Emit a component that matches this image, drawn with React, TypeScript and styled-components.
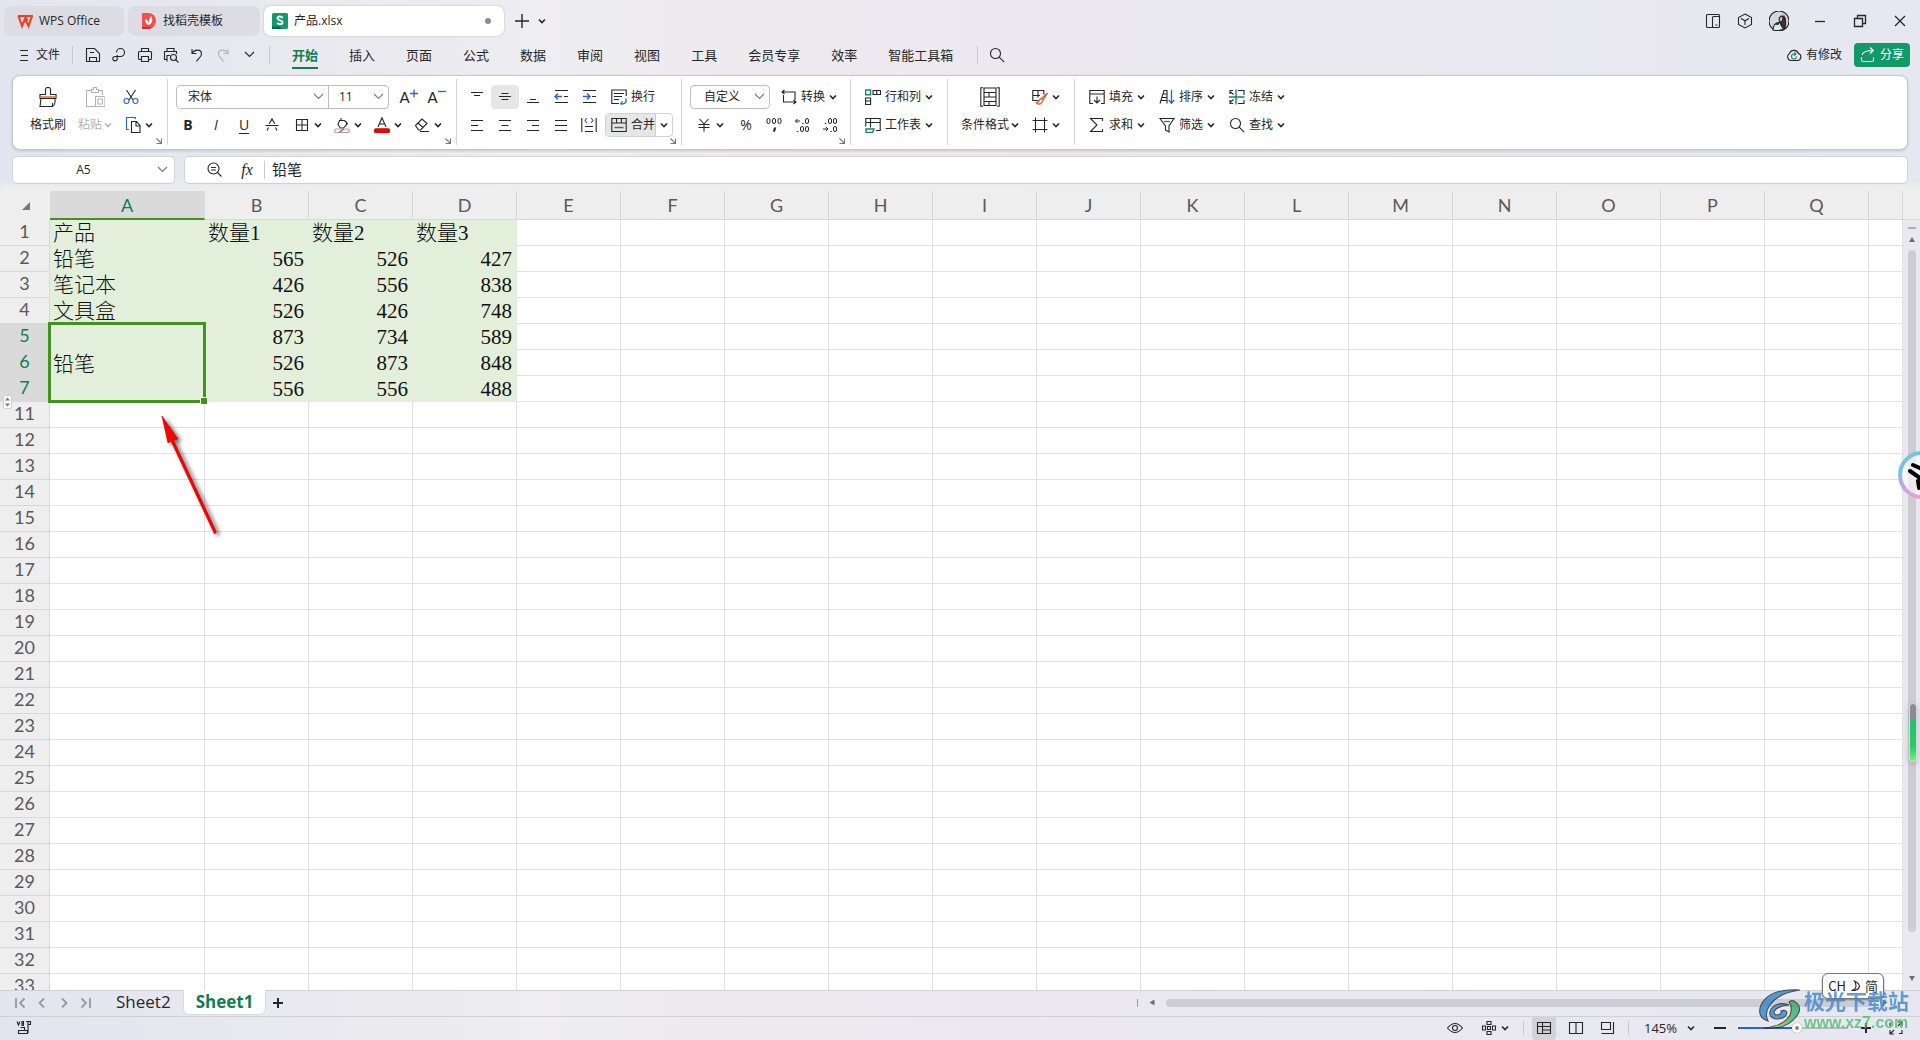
import React, { useEffect, useState } from "react";
import styled, { createGlobalStyle, css } from "styled-components";

const ui = `"Open Sans", "Noto Sans CJK SC", sans-serif`;
const ink = "#262626";
const green = "#0f7f52";
const line = "#d4d4d6";
const fill = "#e2efda";

const GlobalStyle = createGlobalStyle`
  * { box-sizing: border-box; }
  html, body { margin: 0; height: 100%; overflow: hidden; }
  button, input, select { font: inherit; color: inherit; margin: 0; }
  button { border: 0; padding: 0; background: none; cursor: pointer; }
`;

/* ---------- icons ---------- */

const Svg = styled.svg`
  display: block;
  flex: none;
  fill: none;
  stroke: currentColor;
  stroke-width: 1.1;
`;

const BLUE = "#2b5fe0";
const GREEN = "#0f8a5c";
const ORANGE = "#d0622b";

const shapes: Record<string, React.ReactNode> = {
  chev: <path d="M1 2.5 4 5.5 7 2.5" strokeWidth="1.6" />,
  chevThin: <path d="M1 2 5.5 6.5 10 2" />,
  menu: <path d="M0 .5h8M1 5.5h7M0 10.5h8" />,
  save: <path d="M1.5 1.5h8l5 5v8h-13zM4.5 14.5v-4h7v4M5 5.5h4" />,
  share: <path d="M5.500 5.500A4 4 0 1 1 9.500 9.500H4a2.200 2.200 0 1 0 2.200 2.200V8" />,
  print: <path d="M4.5 4.500v-3h7v3M4.500 12.500h-2a1 1 0 0 1-1-1v-6a1 1 0 0 1 1-1h11a1 1 0 0 1 1 1v6a1 1 0 0 1-1 1h-2M4.500 9.500h7v5h-7z" />,
  preview: <><path d="M4 4.500v-3h7v3M4 12.500H1.500v-8h12V7M4 14.500v-6h3" /><circle cx="10.500" cy="10.500" r="3" /><path d="m12.500 12.500 3 3" /></>,
  undo: <path d="M3 2v4.500h4.500M3.200 6C6 2 12.500 2 12.500 7c0 3-3 4-5 7.500" />,
  redo: <path d="M13 2v4.500H8.500M12.800 6C10 2 3.500 2 3.500 7c0 3 3 4 5 7.500" />,
  search: <><circle cx="6.500" cy="6.500" r="5" /><path d="m10.200 10.200 5 5" /></>,
  panel: <path d="M7.500 14.500h-5a1 1 0 0 1-1-1v-11a1 1 0 0 1 1-1h11a1 1 0 0 1 1 1v11a1 1 0 0 1-1 1h-5a1 1 0 0 1-1-1v-9a1 1 0 0 1 1-1h6M10.500 12h2" />,
  cube: <path d="m8 1 6.500 3.500v7L8 15l-6.500-3.500v-7zM4 5.500l4 2.300 4-2.300M8 8v4" />,
  min: <path d="M3 8.500h10" strokeWidth="1.300" />,
  restore: <path d="M5.500 5v-2.500h8v8H11M2.500 5.500h8v8h-8z" strokeWidth="1.300" />,
  close: <path d="m3 3 10 10M13 3 3 13" strokeWidth="1.300" />,
  cloud: <><path d="M4.500 13.500a3.800 3.800 0 0 1-1-7A4.800 4.800 0 0 1 12.500 6.500a3.600 3.600 0 0 1-1 7z" /><path d="M10.500 9.500a2.500 2.500 0 1 1-2.500-2.500h1.500M8.200 5.300 10 7 8.200 8.700" stroke={GREEN} /></>,
  shareBox: <path d="M1.500 10v3a1.500 1.500 0 0 0 1.500 1.500h9a1.500 1.500 0 0 0 1.500-1.500v-3M2 8c1-3.500 5-4.500 11-4.500M10 .5l3.500 3L10 6.500" />,
  brush: <><path d="M7.500 7.500V2.500q0-2 2.500-2t2.500 2v5h5.500v4H2v-4zM3 11.500l-1 8h12.500q2-1 2.500-4v-4" /><path d="M3 10h14" stroke={ORANGE} strokeWidth="1.400" /><path d="M14.500 19v-3" /></>,
  paste: <path d="M6 3.500H1.500v16H10M14 3.500h3.500V8M6.500 5.500v-3h2V.5h3v2h2v3zM10.500 9.500H20v10h-9.500zM13 12h4.500v5H13z" />,
  cut: <><path d="m3.500 1 6.500 10M12.500 1 6 11" /><g stroke={BLUE}><circle cx="3.500" cy="12" r="2.500" /><circle cx="12.500" cy="12" r="2.500" /></g></>,
  copy: <><path d="M10.500 2V.5h-9v12H4" stroke={BLUE} /><path d="M6.500 4.500h5l3.500 4v7H6.500zM11 4.500V9h4" /></>,
  plus: <path d="M0 4.500h8M4 .5v8" stroke={BLUE} strokeWidth="1.300" />,
  dash: <path d="M0 2.500h8" stroke={BLUE} strokeWidth="1.300" />,
  strike: <path d="M1.500 8.500h13M5.200 7 8 2l2.800 5M4.500 10.500l-1.500 3M11.500 10.500l1.500 3" />,
  borders: <path d="M2.500 2.500h11v11h-11zM8 2.500v11M2.500 8h11" />,
  bucket: <><path d="M7 1v3M5.500 3.500h5l3 3-4 4.500h-3L4 7.500zM12.500 4.500v4" /><rect x=".6" y="12" width="14.800" height="3.500" rx="1.700" stroke="#a5a5a5" /><path d="m5 15.500 5-3.500" stroke="#e04040" /></>,
  fontColor: <><path d="M4 10 8 .8 12 10M5.400 7h5.200" /><rect x="0" y="11.500" width="16" height="4.500" rx="2" fill="#f30000" stroke="#b00000" strokeWidth=".5" /></>,
  eraser: <path d="m1.500 8.500 6.500-6.500 5 4.500-6.500 6.500h-2zM4 6l5.500 5M6 14.500h9" />,
  vTop: <path d="M2 3.500h12M5 6.500h6" />,
  vMid: <path d="M4.500 4.500h7M2 7.500h12M4.500 10.500h7" />,
  vBot: <path d="M5 10.500h6M2 13.500h12" />,
  left: <path d="M2 3.500h12M2 8.500h7M2 13.500h12" />,
  center: <path d="M2 3.500h12M4.500 8.500h7M2 13.500h12" />,
  right: <path d="M2 3.500h12M7 8.500h7M2 13.500h12" />,
  justify: <path d="M2 3.500h12M2 8.500h12M2 13.500h12" />,
  outdent: <><path d="M2 1.500h13M2 13.500h13M11 7.500h4" /><path d="M2 7.500h7M5 4.500l-3 3 3 3" stroke={BLUE} strokeWidth="1.400" /></>,
  indent: <><path d="M2 1.500h13M2 13.500h13M11 7.500h4" /><path d="M2 7.500h7M6 4.500l3 3-3 3" stroke={BLUE} strokeWidth="1.400" /></>,
  distribute: <><path d="M.8 1v14M15.200 1v14M4 9.500h8M4 14.500h8" /><path d="M6 1 4 3.500 6 6M10 1l2 2.500L10 6" stroke={BLUE} /></>,
  wrap: <><path d="M8 14.500H.8V1h14.400v6M3 4.500h10M3 7.500h8M3 10.500h5" /><path d="M15 9.500v3q0 2.500-5.500 2.500M11.500 12.500 9.500 15" stroke={GREEN} strokeWidth="1.300" /></>,
  merge: <><path d="M.8 1.500h14.400v13H.8zM.8 6h14.400M5.600 1.500V6M10.400 1.500V6" /><path d="M3.500 10.500h9" stroke={GREEN} strokeWidth="1.400" /></>,
  convert: <path d="M3.500 1 1 3l2.500 2M1 3h13v8M12.500 11l2.500 2-2.500 2M15 13H2.500V6" />,
  yen: <path d="m3.500 2 4.500 5 4.500-5M2.500 7.500h11M2.500 10.500h11M8 7v7.500" />,
  comma: <><g strokeWidth="1"><rect x="1" y="1.500" width="3" height="5" rx="1.500" /><rect x="6.500" y="1.500" width="3" height="5" rx="1.500" /><rect x="12" y="1.500" width="3" height="5" rx="1.500" /></g><path d="M8.500 10.500q1 2-1 4" strokeWidth="2" /></>,
  decUp: <g strokeWidth="1"><path d="M6 4H1.500M3.500 2 1.500 4l2 2" /><rect x="11.500" y="1.500" width="3" height="5" rx="1.500" /><path d="M9 6v1M3.500 14v1" strokeWidth="1.500" /><rect x="6.500" y="9.500" width="3" height="5" rx="1.500" /><rect x="11.500" y="9.500" width="3" height="5" rx="1.500" /></g>,
  decDown: <g strokeWidth="1"><rect x="6.500" y="1.500" width="3" height="5" rx="1.500" /><rect x="11.500" y="1.500" width="3" height="5" rx="1.500" /><path d="M3.500 6v1M9 14v1" strokeWidth="1.500" /><path d="M1 12h5M4 10l2 2-2 2" /><rect x="11.500" y="9.500" width="3" height="5" rx="1.500" /></g>,
  rowscols: <><path d="M8 1.500h7.500v4H8zM11.700 1.500v4M.6 9v6.500h5V9zM.6 12h5" /><path d="M.6 1h5v4.800h-5z" stroke={GREEN} strokeWidth="1.400" /></>,
  sheet: <><path d="M.8 9.500v-8h14.400v12H11M.8 5.500h14.400M5.500 1.500v9" /><path d="M1 12h8l-1.500 3.500H1z" stroke={GREEN} strokeWidth="1.400" /></>,
  cond: <path d="M3 .8H.8v18.400H3M17 .8h2.200v18.400H17M4 1h12v4.500H4zM4 5.500v13h12v-13M4 10h5M9 5.500v4.500M9 10h7M9 14.500h7M4 14.500h5v4" />,
  style: <><path d="M6 11.500H.8v-10h11v4M.8 6.500H8M6 1.500v7" /><path d="m15.500 4-6 5.500 1.500 1.500zM9.500 9.500c-3 0-2 4-5 4.500 3 2.500 6 0 6.500-3" stroke={ORANGE} strokeWidth="1.300" /></>,
  frame: <path d="M3.500.5v15M12.500.5v15M.5 3.500h15M.5 12.500h15" />,
  fillDown: <path d="M4 14.500H.8v-13h14.400v13H12M.8 5h14.400M8 7.500v6M5 11l3 3 3-3" />,
  sigma: <path d="M13.500 4V1.500H1.500L8 8l-6.500 6.500h12V12" />,
  sort: <><path d="M1 14.500 5 1.500h3v13M3 8.500h5M2 11.500h6M4 5h4" /><path d="M12.500 1v13M9.800 11l2.700 3.200 2.700-3.200" stroke={BLUE} strokeWidth="1.300" /></>,
  filter: <><path d="M1 1.500h14L10 9v6l-3.500-2V9z" /><path d="M5 4.500h6" stroke={GREEN} strokeWidth="1.300" /></>,
  freeze: <><path d="M1 5V1.500h3M9 1.500h6V6M1 11v3.500h3M9 14.500h6V11M1.500 3l3 2.500M1.500 13l3-2.500" /><path d="M0 8h15.500M7 .5v15" stroke={GREEN} strokeWidth="1.400" /></>,
  launcher: <path d="M.5 1.500 5 6M5.500 1.500v5h-5" stroke="#777" />,
  zoomOut: <><circle cx="6.500" cy="6.500" r="5.500" /><path d="M4 5.500h5M4 8h5M10.500 10.500l4 4" /></>,
  first: <path d="M4 3v10M12.500 3.500 8 8l4.500 4.500" strokeWidth="1.800" />,
  prev: <path d="M10 3.500 5.500 8l4.500 4.500" strokeWidth="1.800" />,
  next: <path d="M6 3.500 10.500 8 6 12.500" strokeWidth="1.800" />,
  last: <path d="M12 3v10M3.500 3.500 8 8l-4.500 4.500" strokeWidth="1.800" />,
  add: <path d="M3 8h10M8 3v10" strokeWidth="2" />,
  addThin: <path d="M1 8h14M8 1v14" strokeWidth="1.400" />,
  minus: <path d="M2 8h12" strokeWidth="2" />,
  vba: <path d="M1 1.500 2.500 5 4 1.500M6 1.500h1.500v4H6zM6 3.500h2M14.500 5V1.500h-4.500M12 1.500V13M14.500 4.500H12M4.500 7.500h4v3M2.500 10.500h9v3h-9z" />,
  eye: <><path d="M.5 8Q8-1 15.500 8 8 17 .5 8z" /><circle cx="8" cy="8" r="2.500" /></>,
  focus: <path d="M6 1.500h4v3H6zM6 11.500h4v3H6zM1.500 6h3v4h-3zM11.500 6h3v4h-3zM6.500 6.500h3v3h-3z" />,
  normal: <path d="M1.500 2.500h13v11h-13zM1.500 6.500h13M6.500 2.500v11M6.500 10h8" />,
  pages: <path d="M1.500 2.500h13v11h-13zM8 2.500v11" />,
  breaks: <path d="M1.500 2.500h9v7h-9zM13.500 2v11.500H1.500" />,
  full: <path d="M10 2h4v4M14 2l-4 4M6 14H2v-4M2 14l4-4M2 6V2.500M14 10v3.500h-3" />,
};

const Icon = ({ name, size = 16, color }: { name: string; size?: number; color?: string }) => (
  <Svg width={size} height={size} viewBox={`0 0 ${size} ${size}`} color={color} aria-hidden="true">
    {shapes[name]}
  </Svg>
);

const Chev = ({ color }: { color?: string }) => <Icon name="chev" size={8} color={color} />;

/* ---------- frame ---------- */

const Window = styled.div`
  position: relative;
  display: flex;
  flex-direction: column;
  height: 100vh;
  overflow: hidden;
  color: ${ink};
  font: 12px/16px ${ui};
  background: linear-gradient(90deg, #e3e4ef 0, #eeedf0 28%, #ece9ef 45%, #e9e8f0 80%, #e6e7f0 100%);
`;

const TitleBar = styled.header`
  display: flex;
  align-items: center;
  height: 41px;
  padding: 0 0 0 4px;
`;

const DocTab = styled.button<{ $width: number; $active?: boolean }>`
  display: flex;
  align-items: center;
  gap: 6px;
  width: ${(p) => p.$width}px;
  height: 30px;
  margin-right: 4px;
  padding: 0 13px;
  border-radius: 7px;
  background: ${(p) => (p.$active ? "#fff" : "#dcdce2")};
  box-shadow: ${(p) => (p.$active ? "0 0 2px rgba(0,0,0,.25)" : "none")};
  padding-left: ${(p) => (p.$active ? 8 : 13)}px;
`;

const Dirty = styled.span`
  width: 6px;
  height: 6px;
  margin-left: auto;
  border-radius: 3px;
  background: #8e8e8e;
`;

const Spacer = styled.div`
  flex: 1;
`;

const IconButton = styled.button<{ $width?: number; $active?: boolean }>`
  display: flex;
  align-items: center;
  justify-content: center;
  flex: none;
  width: ${(p) => p.$width ?? 28}px;
  height: 24px;
  border-radius: 4px;
  background: ${(p) => (p.$active ? "#e6e6e6" : "none")};
`;

const Avatar = styled(IconButton)`
  margin: 0 11px 0 8px;
`;

const MenuBar = styled.nav`
  display: flex;
  align-items: center;
  height: 34px;
  padding: 0 10px 6px 12px;
`;

const FileButton = styled.button`
  display: flex;
  align-items: center;
  gap: 5px;
  height: 24px;
  padding: 0 12px 0 8px;
`;

const Divider = styled.i<{ $before?: number; $after: number }>`
  width: 1px;
  height: 18px;
  margin: 0 ${(p) => p.$after}px 0 ${(p) => p.$before ?? 0}px;
  background: #c9c8ce;
`;

const Tabs = styled.div`
  display: flex;
  gap: 31px;
  margin: 0 24px 0 15px;
`;

const MenuTab = styled.button<{ $active?: boolean }>`
  height: 28px;
  border-bottom: 2px solid transparent;
  padding-top: 2px;
  font-size: 13px;
  line-height: 24px;
  white-space: nowrap;
  ${(p) =>
    p.$active &&
    css`
      color: ${green};
      font-weight: 700;
      border-color: ${green};
    `}
`;

const Changes = styled.button`
  display: flex;
  align-items: center;
  gap: 4px;
  margin-right: 12px;
`;

const ShareButton = styled.button`
  display: flex;
  align-items: center;
  gap: 4px;
  height: 24px;
  padding: 0 6px;
  border-radius: 4px;
  color: #fff;
  background: #119967;
`;

/* ---------- ribbon ---------- */

const Ribbon = styled.section`
  display: flex;
  flex: none;
  height: 75px;
  margin: 0 12px 6px;
  padding: 3px 0 4px;
  border: 1px solid #c8c7cd;
  border-radius: 8px;
  background: #fff;
  box-shadow: 0 1px 3px rgba(0, 0, 0, 0.16);
`;

const Group = styled.div<{ $left: number; $right: number; $last?: boolean }>`
  position: relative;
  display: flex;
  padding: 6px ${(p) => p.$right}px 0 ${(p) => p.$left}px;
  border-right: ${(p) => (p.$last ? 0 : 1)}px solid ${line};
`;

const Rows = styled.div`
  display: flex;
  flex-direction: column;
  gap: 4px;
`;

const Row = styled.div<{ $inset?: number; $gap?: number }>`
  display: flex;
  gap: ${(p) => p.$gap ?? 0}px;
  height: 24px;
  padding-left: ${(p) => p.$inset ?? 0}px;
`;

const Tall = styled.button<{ $width: number; $muted?: boolean }>`
  display: flex;
  flex-direction: column;
  align-items: center;
  gap: 4px;
  width: ${(p) => p.$width}px;
  height: 52px;
  color: ${(p) => (p.$muted ? "#b3b3b3" : "inherit")};
`;

const TallIcon = styled.span`
  display: flex;
  align-items: center;
  height: 24px;
`;

const TallLabel = styled.span`
  display: flex;
  align-items: center;
  gap: 2px;
  height: 24px;
  white-space: nowrap;
`;

const Split = styled.button`
  display: flex;
  align-items: center;
  gap: 4px;
  height: 24px;
  padding: 0 4px 0 8px;
`;

const Labelled = styled.button`
  display: flex;
  align-items: center;
  gap: 4px;
  height: 24px;
  padding: 0 4px 0 6px;
  white-space: nowrap;
`;

const MergeBox = styled.div`
  display: flex;
  height: 24px;
  border: 1px solid #d2d2d2;
  border-radius: 4px;
  overflow: hidden;
`;

const MergeMain = styled(Labelled)`
  height: 22px;
  padding: 0 0 0 5px;
  background: #e6e6e6;
  border-right: 1px solid #cfcfcf;
`;

const MergeMore = styled(IconButton)`
  height: 22px;
`;

const LauncherButton = styled.button`
  position: absolute;
  right: 3px;
  bottom: 0;
`;

const Launcher = () => (
  <LauncherButton aria-label="更多设置">
    <Icon name="launcher" size={8} />
  </LauncherButton>
);

const Combo = styled.div`
  display: flex;
  height: 24px;
  border: 1px solid #bdbdbd;
  border-radius: 4px;
`;

const SelectBox = styled.label<{ $width: number; $divided?: boolean }>`
  display: flex;
  align-items: center;
  width: ${(p) => p.$width}px;
  padding-right: 4px;
  color: #7a7a7a;
  border-left: ${(p) => (p.$divided ? 1 : 0)}px solid #bdbdbd;
`;

const Select = styled.select<{ $pad: number }>`
  flex: 1;
  min-width: 0;
  height: 22px;
  padding: 0 0 0 ${(p) => p.$pad}px;
  border: 0;
  outline: 0;
  appearance: none;
  background: none;
  color: ${ink};
`;

const Letter = styled.span<{ $kind: string }>`
  font-family: "Open Sans", sans-serif;
  font-size: 14px;
  font-weight: ${(p) => (p.$kind === "b" ? 700 : 400)};
  font-style: ${(p) => (p.$kind === "i" ? "italic" : "normal")};
  text-decoration: ${(p) => (p.$kind === "u" ? "underline" : "none")};
  text-underline-offset: 3px;
`;

const Sized = styled.span`
  display: flex;
  align-items: flex-start;
  font-family: Lato, sans-serif;
  font-size: 15px;
`;

/* ---------- formula bar ---------- */

const FormulaBar = styled.section`
  display: flex;
  gap: 9px;
  height: 28px;
  margin: 0 12px 7px;
`;

const Field = styled.div<{ $width?: number }>`
  display: flex;
  align-items: center;
  flex: ${(p) => (p.$width ? `0 0 ${p.$width}px` : "1")};
  min-width: 0;
  border: 1px solid #d2d1d6;
  border-bottom-color: #b9b9bc;
  border-radius: 5px;
  background: #fff;
`;

const NameInput = styled.input`
  flex: 1;
  width: 0;
  min-width: 0;
  padding: 0 0 0 4px;
  border: 0;
  outline: 0;
  text-align: center;
  background: none;
`;

const NameMore = styled(IconButton)`
  color: #777;
`;

const Fx = styled.span`
  font: italic 16px/20px "Liberation Serif", serif;
`;

const FormulaTools = styled.div`
  display: flex;
  align-items: center;
  gap: 2px;
  padding-left: 15px;
`;

const FormulaInput = styled.input`
  flex: 1;
  min-width: 0;
  height: 24px;
  padding: 0 0 3px;
  border: 0;
  outline: 0;
  font-size: 15px;
  background: none;
`;

/* ---------- sheet ---------- */

const SheetArea = styled.main`
  position: relative;
  display: flex;
  flex: 1;
  min-height: 0;
  background: #eee;
  box-shadow: 0 -7px 5px #eee;
`;

const GridView = styled.div`
  position: relative;
  flex: 1;
  min-width: 0;
  overflow: hidden;
`;

const Grid = styled.table`
  width: 100%;
  table-layout: fixed;
  border-collapse: separate;
  border-spacing: 0;
  background: #fff;
`;

const head = css`
  padding: 0;
  font: 400 18px/22px Lato, sans-serif;
  text-align: center;
  border: 0 solid #d8d8d8;
  border-width: 0 1px 1px 0;
`;

const ColHead = styled.th<{ $on?: boolean }>`
  ${head}
  height: 29px;
  color: ${(p) => (p.$on ? green : "#595959")};
  background: ${(p) => (p.$on ? "#dadada" : "#eee")};
  ${(p) => p.$on && "border-bottom: 2px solid #43921f; border-right-color: #dadada;"}
`;

const Corner = styled.th`
  ${head}
  border-color: #eee;
  background: #eee;
`;

const CornerMark = styled.i`
  display: block;
  width: 0;
  height: 0;
  margin: 2px 0 0 22px;
  border: 4px solid transparent;
  border-right-color: #767676;
  border-bottom-color: #767676;
`;

const RowHead = styled.th<{ $on?: boolean }>`
  ${head}
  position: relative;
  height: 26px;
  vertical-align: top;
  color: ${(p) => (p.$on ? green : "#595959")};
  background: ${(p) => (p.$on ? "#dadada" : "#eee")};
  border-bottom-color: ${(p) => (p.$on ? "#dadada" : "#d8d8d8")};
`;

const Cell = styled.td<{ $filled?: boolean; $num?: boolean; $merged?: boolean }>`
  position: relative;
  height: 26px;
  padding: ${(p) => (p.$merged ? "4px" : "2px")} 4px 0 3px;
  border: 0 solid ${(p) => (p.$filled ? fill : "#e2e2e2")};
  border-width: 0 1px 1px 0;
  background: ${(p) => (p.$filled ? fill : "#fff")};
  color: #111;
  font: 300 21px/23px "Liberation Serif", "Noto Sans CJK SC", serif;
  text-align: ${(p) => (p.$num ? "right" : "left")};
  white-space: nowrap;
`;

const Selection = styled.span`
  position: absolute;
  z-index: 2;
  inset: -2px;
  border: 3px solid #43921f;
  &::after {
    content: "";
    position: absolute;
    right: -4px;
    bottom: -4px;
    width: 6px;
    height: 6px;
    background: #43921f;
    border: 0 solid #fff;
    border-width: 1px 0 0 1px;
  }
`;

const Unhide = styled.button`
  position: absolute;
  z-index: 2;
  left: 3px;
  bottom: -8px;
  border: 1px solid #d0d0d0;
  border-radius: 2px;
  background: #fff;
`;

const Pointer = styled.svg`
  position: absolute;
  z-index: 3;
  left: 150px;
  top: 215px;
`;

const VScroll = styled.div`
  display: flex;
  flex-direction: column;
  align-items: center;
  gap: 8px;
  flex: 0 0 17px;
  margin-top: 28px;
  padding: 7px 0 9px;
  background: #e9e8ee;
  border-top: 1px solid #dcdce0;
`;

const Grip = styled.i`
  width: 8px;
  height: 2px;
  background: #b0b0b4;
`;

const Triangle = styled.i<{ $turn: number }>`
  flex: none;
  width: 0;
  height: 0;
  border: 3px solid transparent;
  border-bottom: 5px solid #6d6d70;
  border-top: 0;
  transform: rotate(${(p) => p.$turn}deg);
`;

const VTrack = styled.div`
  flex: 1;
  padding-bottom: 36px;
`;

const VThumb = styled.div`
  width: 8px;
  height: 100%;
  border-radius: 4px;
  background: #cdccd2;
`;

/* ---------- bottom bars ---------- */

const SheetTabs = styled.footer`
  display: flex;
  flex: none;
  height: 27px;
  border: 0 solid #d0cfd4;
  border-width: 1px 0;
`;

const SheetNav = styled.div`
  display: flex;
  gap: 6px;
  margin: 0 10px 0 12px;
  color: #9a9a9c;
`;

const SheetTab = styled.button<{ $active?: boolean }>`
  height: 24px;
  margin-top: -1px;
  padding: 0 12px;
  font: ${(p) => (p.$active ? 700 : 400)} 17px/24px "Open Sans", sans-serif;
  ${(p) =>
    p.$active &&
    css`
      height: 25px;
      color: ${green};
      background: #fff;
      border: 1px solid #dcdce0;
      border-top: 0;
      border-radius: 0 0 6px 6px;
    `}
`;

const HScroll = styled.div`
  display: flex;
  align-items: center;
  gap: 11px;
  flex: 0 0 41%;
  margin-left: auto;
  padding: 0 32px 2px 4px;
`;

const HGrip = styled.i`
  width: 1px;
  height: 8px;
  background: #9c9ca0;
`;

const HThumb = styled.div`
  flex: 1;
  height: 8px;
  border-radius: 4px;
  background: #cdccd2;
`;

const StatusBar = styled.footer`
  display: flex;
  align-items: center;
  gap: 8px;
  flex: none;
  height: 23px;
  padding: 0 12px 2px;
`;

const StatusSep = styled.i`
  width: 1px;
  height: 14px;
  background: #c9c8ce;
`;

const ViewButton = styled(IconButton)`
  background: ${(p) => (p.$active ? "#d3d2d9" : "none")};
`;

const Focus = styled.button`
  display: flex;
  align-items: center;
  gap: 4px;
  width: 36px;
  padding-left: 2px;
`;

const ZoomLevel = styled.button`
  display: flex;
  align-items: center;
  gap: 10px;
  width: 65px;
  padding-left: 7px;
  font-size: 13px;
`;

const Slider = styled.input`
  width: 110px;
  height: 16px;
  appearance: none;
  background: linear-gradient(90deg, #2b5fe0 54%, #b9b9c0 54%) center / 100% 2px no-repeat;
  &::-webkit-slider-thumb {
    appearance: none;
    width: 10px;
    height: 10px;
    border-radius: 5px;
    border: 3px solid #fff;
    background: #8a8a8a;
    box-shadow: 0 0 1px rgba(0, 0, 0, 0.5);
  }
`;

/* ---------- floating widgets ---------- */

const Ime = styled.div`
  position: absolute;
  z-index: 4;
  right: 36px;
  bottom: 41px;
  display: flex;
  align-items: center;
  gap: 4px;
  height: 26px;
  padding: 0 5px;
  border: 1px solid #777;
  border-radius: 6px;
  background: #fff;
  font-size: 13px;
  font-family: "Noto Sans CJK SC", sans-serif;
  box-shadow: 0 1px 2px rgba(0, 0, 0, 0.4);
`;

const Watermark = styled.div`
  position: absolute;
  z-index: 5;
  right: 11px;
  bottom: 7px;
  display: flex;
  gap: 2px;
  opacity: 0.8;
  pointer-events: none;
`;

const WaterName = styled.div`
  color: #3f87d0;
  font: 700 21px/25px "Noto Sans CJK SC", sans-serif;
`;

const WaterUrl = styled.div`
  color: #4fc06b;
  font: 700 16px/20px "Liberation Sans", sans-serif;
`;

const Assistant = styled.button`
  position: absolute;
  z-index: 4;
  right: -26px;
  top: 451px;
`;

const Battery = styled.div`
  position: absolute;
  z-index: 4;
  right: 3px;
  top: 703px;
  width: 8px;
  height: 59px;
  border: 1px solid #d8d8dc;
  border-radius: 4px;
  background: linear-gradient(#8b8a90 27%, #1fc46a 28%, #29cc6a 75%, #76f07a);
  box-shadow: 0 2px 6px rgba(0, 0, 0, 0.2);
`;

/* ---------- data ---------- */

const columns = "ABCDEFGHIJKLMNOPQ".split("");
const data: (string | number)[][] = [
  ["产品", "数量1", "数量2", "数量3"],
  ["铅笔", 565, 526, 427],
  ["笔记本", 426, 556, 838],
  ["文具盒", 526, 426, 748],
  ["铅笔", 873, 734, 589],
  ["", 526, 873, 848],
  ["", 556, 556, 488],
];
const ROW_HEIGHT = 26;
const CHROME_HEIGHT = 270;
const HIDDEN_FROM = 8;
const HIDDEN_COUNT = 3;
const menuTabs = ["开始", "插入", "页面", "公式", "数据", "审阅", "视图", "工具", "会员专享", "效率", "智能工具箱"];
const quick = [
  ["save", "保存"],
  ["share", "输出为PDF"],
  ["print", "打印"],
  ["preview", "打印预览"],
  ["undo", "撤销"],
];

/* Row numbers that fit in the window, skipping the hidden ones. */
const visibleRows = () => {
  const count = Math.max(data.length, Math.ceil((window.innerHeight - CHROME_HEIGHT) / ROW_HEIGHT));
  return Array.from({ length: count }, (_, i) => (i + 1 < HIDDEN_FROM ? i + 1 : i + 1 + HIDDEN_COUNT));
};

const useVisibleRows = () => {
  const [rows, setRows] = useState(visibleRows);
  useEffect(() => {
    const update = () => setRows(visibleRows());
    window.addEventListener("resize", update);
    return () => window.removeEventListener("resize", update);
  }, []);
  return rows;
};

const Tool = ({ icon, label, active, width }: { icon: string; label: string; active?: boolean; width?: number }) => (
  <IconButton aria-label={label} $active={active} $width={width}>
    <Icon name={icon} />
  </IconButton>
);

const SplitTool = ({ icon, label }: { icon: string; label: string }) => (
  <Split aria-label={label}>
    <Icon name={icon} />
    <Chev />
  </Split>
);

const TextTool = ({ icon, text, plain }: { icon: string; text: string; plain?: boolean }) => (
  <Labelled>
    <Icon name={icon} />
    <span>{text}</span>
    {!plain && <Chev />}
  </Labelled>
);

function RibbonBar() {
  return (
    <Ribbon>
      <Group $left={12} $right={10}>
        <Tall $width={46}>
          <TallIcon><Icon name="brush" size={20} /></TallIcon>
          <TallLabel>格式刷</TallLabel>
        </Tall>
        <Tall $width={48} $muted>
          <TallIcon><Icon name="paste" size={20} /></TallIcon>
          <TallLabel>粘贴<Chev /></TallLabel>
        </Tall>
        <Rows>
          <Tool icon="cut" label="剪切" width={24} />
          <Row>
            <Labelled aria-label="复制"><Icon name="copy" /><Chev /></Labelled>
          </Row>
        </Rows>
        <Launcher />
      </Group>

      <Group $left={6} $right={5}>
        <Rows>
          <Row $inset={2} $gap={6}>
            <Combo>
              <SelectBox $width={151}>
                <Select $pad={11} aria-label="字体"><option>宋体</option></Select>
                <Icon name="chevThin" size={11} />
              </SelectBox>
              <SelectBox $width={60} $divided>
                <Select $pad={10} aria-label="字号"><option>11</option></Select>
                <Icon name="chevThin" size={11} />
              </SelectBox>
            </Combo>
            <Row>
              <IconButton aria-label="增大字号"><Sized>A<Icon name="plus" size={9} /></Sized></IconButton>
              <IconButton aria-label="减小字号"><Sized>A<Icon name="dash" size={9} /></Sized></IconButton>
            </Row>
          </Row>
          <Row>
            <IconButton aria-label="加粗"><Letter $kind="b">B</Letter></IconButton>
            <IconButton aria-label="倾斜"><Letter $kind="i">I</Letter></IconButton>
            <IconButton aria-label="下划线"><Letter $kind="u">U</Letter></IconButton>
            <Tool icon="strike" label="删除线" />
            <SplitTool icon="borders" label="边框" />
            <SplitTool icon="bucket" label="填充颜色" />
            <SplitTool icon="fontColor" label="字体颜色" />
            <SplitTool icon="eraser" label="清除" />
          </Row>
        </Rows>
        <Launcher />
      </Group>

      <Group $left={6} $right={8}>
        <Rows>
          <Row>
            <Tool icon="vTop" label="顶端对齐" />
            <Tool icon="vMid" label="垂直居中" active />
            <Tool icon="vBot" label="底端对齐" />
            <Tool icon="outdent" label="减少缩进" />
            <Tool icon="indent" label="增加缩进" />
            <Row $inset={2}><TextTool icon="wrap" text="换行" plain /></Row>
          </Row>
          <Row>
            <Tool icon="left" label="左对齐" />
            <Tool icon="center" label="水平居中" />
            <Tool icon="right" label="右对齐" />
            <Tool icon="justify" label="两端对齐" />
            <Tool icon="distribute" label="分散对齐" />
            <Row $inset={2}>
              <MergeBox>
                <MergeMain><Icon name="merge" /><span>合并</span></MergeMain>
                <MergeMore $width={16} aria-label="合并选项"><Chev /></MergeMore>
              </MergeBox>
            </Row>
          </Row>
        </Rows>
        <Launcher />
      </Group>

      <Group $left={6} $right={6}>
        <Rows>
          <Row $inset={2} $gap={5}>
            <Combo>
              <SelectBox $width={78}>
                <Select $pad={13} aria-label="数字格式"><option>自定义</option></Select>
                <Icon name="chevThin" size={11} />
              </SelectBox>
            </Combo>
            <TextTool icon="convert" text="转换" />
          </Row>
          <Row>
            <Row><SplitTool icon="yen" label="货币" /></Row>
            <Row $inset={4}>
              <IconButton aria-label="百分比"><Letter $kind="n">%</Letter></IconButton>
              <Tool icon="comma" label="千位分隔" />
              <Tool icon="decUp" label="增加小数位" />
              <Tool icon="decDown" label="减少小数位" />
            </Row>
          </Row>
        </Rows>
        <Launcher />
      </Group>

      <Group $left={8} $right={10}>
        <Rows>
          <TextTool icon="rowscols" text="行和列" />
          <TextTool icon="sheet" text="工作表" />
        </Rows>
      </Group>

      <Group $left={8} $right={10}>
        <Tall $width={68}>
          <TallIcon><Icon name="cond" size={20} /></TallIcon>
          <TallLabel>条件格式<Chev /></TallLabel>
        </Tall>
        <Rows>
          <SplitTool icon="style" label="表格样式" />
          <SplitTool icon="frame" label="单元格样式" />
        </Rows>
      </Group>

      <Group $left={8} $right={8} $last>
        <Rows>
          <Row $gap={4}>
            <TextTool icon="fillDown" text="填充" />
            <TextTool icon="sort" text="排序" />
            <TextTool icon="freeze" text="冻结" />
          </Row>
          <Row $gap={4}>
            <TextTool icon="sigma" text="求和" />
            <TextTool icon="filter" text="筛选" />
            <TextTool icon="search" text="查找" />
          </Row>
        </Rows>
      </Group>
    </Ribbon>
  );
}

function SheetGrid() {
  const rows = useVisibleRows();
  return (
    <Grid>
      <colgroup>
        <col width={50} />
        <col width={155} />
        {columns.slice(1).map((c) => <col key={c} width={104} />)}
        <col />
      </colgroup>
      <thead>
        <tr>
          <Corner><CornerMark /></Corner>
          {columns.map((c) => <ColHead key={c} scope="col" $on={c === "A"}>{c}</ColHead>)}
          <ColHead />
        </tr>
      </thead>
      <tbody>
        {rows.map((n) => {
          const values = data[n - 1];
          return (
            <tr key={n}>
              <RowHead scope="row" $on={n >= 5 && n <= 7}>
                {n}
                {n === 7 && (
                  <Unhide aria-label="展开隐藏行">
                    <Svg width="7" height="12" viewBox="0 0 7 12">
                      <path d="M1 4.500 3.500 1.500 6 4.500zM1 7.500h5L3.500 10.500z" fill="#6b7a99" stroke="none" />
                    </Svg>
                  </Unhide>
                )}
              </RowHead>
              {columns.map((c, i) => {
                if (i === 0 && (n === 6 || n === 7)) return null;
                const value = values?.[i];
                const merged = i === 0 && n === 5;
                return (
                  <Cell
                    key={c}
                    rowSpan={merged ? 3 : undefined}
                    $merged={merged}
                    $filled={value !== undefined}
                    $num={typeof value === "number"}
                  >
                    {value}
                    {merged && <Selection />}
                  </Cell>
                );
              })}
              <Cell />
            </tr>
          );
        })}
      </tbody>
    </Grid>
  );
}

export default function App() {
  return (
    <Window>
      <GlobalStyle />
      <TitleBar>
        <DocTab $width={120}>
          <Svg width="16" height="16" viewBox="0 0 16 16">
            <path d="M1 3h14l-3.500 10L8 6 5 13 1.500 3M8 3.500 10.500 8" stroke="#f0402c" strokeWidth="2.200" />
          </Svg>
          <span>WPS Office</span>
        </DocTab>
        <DocTab $width={132}>
          <Svg width="16" height="16" viewBox="0 0 16 16">
            <path d="M2 0h5.500a7.500 8 0 0 1 0 16H1V1q0-1 1-1z" fill="#f0504f" stroke="none" />
            <path d="M1 14h10l-3.500 2H1z" fill="#c92f36" stroke="none" />
            <path d="M7.500 12C4 10 4 8 4.500 6c2 1 3 2.500 3 6zM7.500 12C7.500 7 9 5 10 3c2.500 4 1 8-2.500 9z" fill="#fff" stroke="none" />
          </Svg>
          <span>找稻壳模板</span>
        </DocTab>
        <DocTab $width={240} $active>
          <Svg width="16" height="16" viewBox="0 0 16 16">
            <rect width="16" height="16" rx="1.500" fill="#149a68" stroke="none" />
            <path d="M0 13.500h8l2 2.500H0z" fill="#0a6b47" stroke="none" />
            <path d="M10.800 4.800Q8 2.500 5.700 4.300 4.700 6.500 8 7.300 11.500 8.300 10.300 10.600 8 12.200 5 10" stroke="#fff" strokeWidth="1.800" />
          </Svg>
          <span>产品.xlsx</span>
          <Dirty />
        </DocTab>
        <IconButton $width={28} aria-label="新建标签"><Icon name="addThin" /></IconButton>
        <IconButton $width={12} aria-label="标签列表"><Chev /></IconButton>
        <Spacer />
        <IconButton $width={32} aria-label="侧边栏"><Icon name="panel" /></IconButton>
        <IconButton $width={32} aria-label="应用"><Icon name="cube" /></IconButton>
        <Avatar $width={20} aria-label="账号">
          <Svg width="20" height="20" viewBox="0 0 20 20" stroke="none">
            <circle cx="10" cy="10" r="10" fill="#cfdcde" />
            <path d="M4 19q0-7 7-8l5 6q-5 4-12 2z" fill="#dcecec" />
            <path d="M12 5q4-1 4.500 4 .5 6-1 8.500-3-1-4-5z" fill="#3a333c" />
            <path d="M10.500 6.500q2-2 3.500 0 0 4-2.500 5-2-2-1-5z" fill="#e5b3a2" />
            <path d="M12 5q2-2 4 0" stroke="#c99a3c" />
            <path d="m6.500 13 4-1.500-1.500 2z" fill="#57505a" />
          </Svg>
        </Avatar>
        <IconButton $width={40} aria-label="最小化"><Icon name="min" /></IconButton>
        <IconButton $width={40} aria-label="还原"><Icon name="restore" /></IconButton>
        <IconButton $width={40} aria-label="关闭"><Icon name="close" /></IconButton>
      </TitleBar>

      <MenuBar>
        <FileButton><Icon name="menu" size={11} />文件</FileButton>
        <Divider $after={7} />
        {quick.map(([icon, label]) => (
          <Tool key={icon} width={26} icon={icon} label={label} />
        ))}
        <IconButton $width={26} aria-label="恢复"><Icon name="redo" color="#b4b4b8" /></IconButton>
        <IconButton $width={26} aria-label="更多"><Icon name="chevThin" size={11} /></IconButton>
        <Divider $before={7} $after={7} />
        <Tabs>
          {menuTabs.map((t) => <MenuTab key={t} $active={t === "开始"}>{t}</MenuTab>)}
        </Tabs>
        <Divider $after={5} />
        <IconButton aria-label="搜索"><Icon name="search" /></IconButton>
        <Spacer />
        <Changes><Icon name="cloud" />有修改</Changes>
        <ShareButton><Icon name="shareBox" />分享</ShareButton>
      </MenuBar>

      <RibbonBar />

      <FormulaBar>
        <Field $width={163}>
          <NameInput aria-label="名称框" defaultValue="A5" />
          <NameMore $width={24} aria-label="名称列表"><Icon name="chevThin" size={11} /></NameMore>
        </Field>
        <Field>
          <FormulaTools>
            <IconButton $width={30} aria-label="浏览公式结果"><Icon name="zoomOut" /></IconButton>
            <IconButton $width={30} aria-label="插入函数"><Fx>fx</Fx></IconButton>
            <Divider $after={7} />
          </FormulaTools>
          <FormulaInput aria-label="编辑栏" defaultValue="铅笔" />
        </Field>
      </FormulaBar>

      <SheetArea>
        <GridView>
          <SheetGrid />
          <Pointer width="80" height="140" viewBox="0 0 80 140">
            <defs>
              <filter id="soft" x="-30%" y="-30%" width="160%" height="160%">
                <feDropShadow dx="3" dy="2" stdDeviation="2" floodColor="#000" floodOpacity=".6" />
              </filter>
            </defs>
            <path d="M12 10 28 33 23.500 34 66.500 126 64.500 128 21 35 18 37z" fill="#fb0606" stroke="#c00808" strokeWidth=".6" filter="url(#soft)" />
          </Pointer>
        </GridView>
        <VScroll>
          <Grip />
          <Triangle $turn={0} />
          <VTrack><VThumb /></VTrack>
          <Triangle $turn={180} />
        </VScroll>
      </SheetArea>

      <SheetTabs>
        <SheetNav>
          <IconButton $width={16} aria-label="第一个工作表"><Icon name="first" /></IconButton>
          <IconButton $width={16} aria-label="上一个工作表"><Icon name="prev" /></IconButton>
          <IconButton $width={16} aria-label="下一个工作表"><Icon name="next" /></IconButton>
          <IconButton $width={16} aria-label="最后一个工作表"><Icon name="last" /></IconButton>
        </SheetNav>
        <SheetTab>Sheet2</SheetTab>
        <SheetTab $active>Sheet1</SheetTab>
        <IconButton $width={24} aria-label="新建工作表"><Icon name="add" /></IconButton>
        <HScroll>
          <HGrip />
          <Triangle $turn={-90} />
          <HThumb />
          <Triangle $turn={90} />
        </HScroll>
      </SheetTabs>

      <StatusBar>
        <IconButton $width={24} aria-label="宏"><Icon name="vba" /></IconButton>
        <Spacer />
        <IconButton $width={32} aria-label="护眼模式"><Icon name="eye" /></IconButton>
        <Focus aria-label="阅读模式"><Icon name="focus" /><Chev /></Focus>
        <StatusSep />
        <ViewButton $width={24} $active aria-label="普通视图"><Icon name="normal" /></ViewButton>
        <ViewButton $width={24} aria-label="页面布局"><Icon name="pages" /></ViewButton>
        <ViewButton $width={24} aria-label="分页预览"><Icon name="breaks" /></ViewButton>
        <StatusSep />
        <ZoomLevel>145%<Chev /></ZoomLevel>
        <IconButton $width={20} aria-label="缩小"><Icon name="minus" /></IconButton>
        <Slider type="range" min={0} max={100} defaultValue={54} aria-label="显示比例" />
        <IconButton $width={20} aria-label="放大"><Icon name="add" /></IconButton>
        <IconButton $width={24} aria-label="全屏"><Icon name="full" /></IconButton>
      </StatusBar>

      <Battery />
      <Assistant aria-label="助手">
        <Svg width="48" height="48" viewBox="0 0 48 48">
          <defs>
            <linearGradient id="ring" x1="0" y1="0" x2="0" y2="1">
              <stop offset=".4" stopColor="#74c6de" />
              <stop offset=".75" stopColor="#b8a8e8" />
              <stop offset="1" stopColor="#eb9fd4" />
            </linearGradient>
          </defs>
          <circle cx="24" cy="24" r="22" fill="#fff" fillOpacity=".6" stroke="url(#ring)" strokeWidth="4" />
          <path d="m15 14 9 4M12 20l10 7M20 30l1 7" stroke="#000" strokeWidth="4" strokeLinecap="round" />
        </Svg>
      </Assistant>
      <Ime>
        <span>CH</span>
        <Svg width="11" height="12" viewBox="0 0 11 12"><path d="M4.500 1Q9 3 9.500 6.500 8 11 1.500 10.500 6 9.500 6 6 6 3 4.500 1z" /></Svg>
        <span>简</span>
      </Ime>
      <Watermark>
        <Svg width="44" height="44" viewBox="0 0 44 44" stroke="none">
          <defs>
            <linearGradient id="leaf" x1="0" y1="1" x2="1" y2="0">
              <stop offset=".1" stopColor="#e0d83a" />
              <stop offset=".5" stopColor="#45b964" />
              <stop offset="1" stopColor="#2f9e6a" />
            </linearGradient>
          </defs>
          <path d="M42 2Q8 0 2 20q-2 10 8 13-4-8 2-16Q20 5 42 2z" fill="#2f86cc" />
          <path d="M36 13q10 6 2 16Q28 42 6 40q20-2 26-13 3-8-1-13 2-2 5-1z" fill="url(#leaf)" />
          <path d="M31 17q-12-4-18 4-4 8 5 10 10 0 11-6-1-4-6-2 1 4-5 4-4-2 0-6 6-4 13-4z" fill="#2f86cc" />
        </Svg>
        <div>
          <WaterName>极光下载站</WaterName>
          <WaterUrl>www.xz7.com</WaterUrl>
        </div>
      </Watermark>
    </Window>
  );
}
